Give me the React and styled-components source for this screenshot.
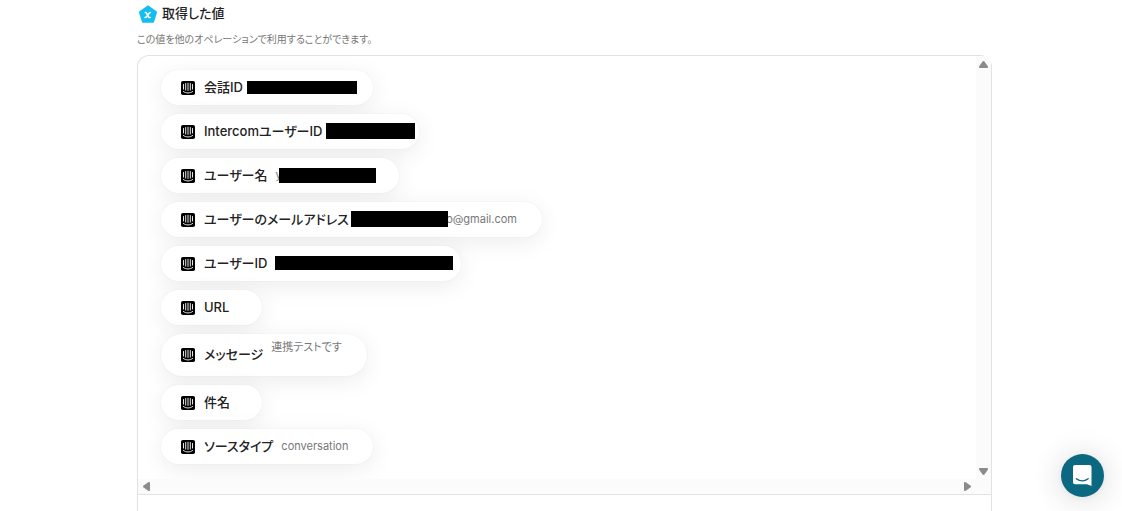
import React from 'react';
import styled, { createGlobalStyle } from 'styled-components';

const values = [
    { label: '会話ID', width: 97, mask: { left: -4, width: 110, height: 13 } },
    { label: 'IntercomユーザーID', width: 64, mask: { left: -4, width: 89, height: 16, up: 2 } },
    { label: 'ユーザー名', text: 'y', width: 98, mask: { left: 3, width: 97, height: 15, up: 1 } },
    { label: 'ユーザーのメールアドレス', text: 'o@gmail.com', width: 160, end: true, mask: { left: -6, width: 97, height: 16, up: 2 } },
    { label: 'ユーザーID', width: 161, mask: { left: 0, width: 178, height: 14, up: 1 } },
    { label: 'URL' },
    { label: 'メッセージ', text: '連携テストです', multiline: true },
    { label: '件名' },
    { label: 'ソースタイプ', text: 'conversation' },
];

const IntercomIcon = () => (
    <svg width="14" height="14" viewBox="0 0 14 14" aria-hidden="true">
        <rect width="14" height="14" rx="1.8" fill="#000" />
        <path
            d="M2.5 3.5v4.6M4.7 2.5v6.6M7 2.2v7.2M9.3 2.5v6.6M11.5 3.5v4.6M2.4 10.5c2.7 2 6.5 2 9.2 0"
            fill="none"
            stroke="#fff"
            strokeWidth="0.9"
            strokeLinecap="round"
        />
    </svg>
);

const VariableIcon = () => (
    <svg width="21" height="19" viewBox="0 0 21 19" aria-hidden="true">
        <path
            d="M11 1.6 18.8 7.3 15.9 16.6H6.1L3.2 7.3Z"
            fill="#15bdf0"
            stroke="#15bdf0"
            strokeWidth="2.4"
            strokeLinejoin="round"
        />
        <path
            d="M8.2 7.6h1l2.8 5h1.2M13.4 7.6c-1.3 0-1.7.9-2.6 2.5s-1.4 2.5-2.8 2.5"
            fill="none"
            stroke="#fff"
            strokeWidth="1.5"
            strokeLinecap="round"
            strokeLinejoin="round"
        />
    </svg>
);

const Arrow = ({ turn = 0 }) => (
    <svg width="11" height="11" viewBox="0 0 11 11" aria-hidden="true">
        <path
            d="M5.5 2 9.5 7.5V8.5H1.5V7.5Z"
            fill="#8b8b8b"
            stroke="#8b8b8b"
            strokeLinejoin="round"
            transform={`rotate(${turn} 5.5 5.5)`}
        />
    </svg>
);

const ValueItem = ({ item }) => (
    <Pill $tall={item.multiline}>
        <IntercomIcon />
        <Label>{item.label}</Label>
        {(item.text || item.mask) && (
            <Value $width={item.width} $end={item.end} $top={item.multiline}>
                {item.text}
                {item.mask && (
                    <Mask
                        $left={item.mask.left}
                        $width={item.mask.width}
                        $height={item.mask.height}
                        $up={item.mask.up}
                    />
                )}
            </Value>
        )}
    </Pill>
);

const App = () => (
    <>
        <GlobalStyle />
        <Page>
            <Header>
                <VariableIcon />
                <Title>取得した値</Title>
            </Header>
            <Description>この値を他のオペレーションで利用することができます。</Description>
            <Card>
                <ScrollArea>
                    <List>
                        {values.map((item) => (
                            <ValueItem key={item.label} item={item} />
                        ))}
                    </List>
                    <VerticalBar>
                        <ArrowButton type="button" aria-label="上へスクロール"><Arrow /></ArrowButton>
                        <ArrowButton type="button" aria-label="下へスクロール"><Arrow turn={180} /></ArrowButton>
                    </VerticalBar>
                    <HorizontalBar>
                        <ArrowButton type="button" aria-label="左へスクロール"><Arrow turn={270} /></ArrowButton>
                        <ArrowButton type="button" aria-label="右へスクロール"><Arrow turn={90} /></ArrowButton>
                    </HorizontalBar>
                    <Corner />
                </ScrollArea>
            </Card>
        </Page>
        <ChatButton type="button" aria-label="チャットを開く">
            <svg width="21" height="23" viewBox="0 0 21 23" aria-hidden="true">
                <path d="M3 1h14.5a2 2 0 0 1 2 2V22l-4.500-1.700H3A2 2 0 0 1 1 18.300V3A2 2 0 0 1 3 1Z" fill="#fff" />
                <path d="M4.4 14.700c3.500 2.700 8.200 2.700 11.700 0" fill="none" stroke="#0a6880" strokeWidth="1.4" strokeLinecap="round" />
            </svg>
        </ChatButton>
    </>
);

export default App;

const GlobalStyle = createGlobalStyle`
    * {
        box-sizing: border-box;
    }
    body {
        margin: 0;
        background: #fff;
        color: #222;
        font-family: Inter, "Noto Sans CJK JP", sans-serif;
        font-feature-settings: "palt";
    }
    #root {
        height: 100vh;
        overflow: hidden;
    }
`;

const Page = styled.main`
    min-height: 100vh;
    padding: 4px 130px 0 137px;
    display: flex;
    flex-direction: column;
`;

const Header = styled.header`
    display: flex;
    align-items: center;
    gap: 4px;
    height: 20px;
`;

const Title = styled.h2`
    margin: 0;
    padding-bottom: 2px;
    font-size: 13px;
    line-height: 20px;
    font-weight: 500;
`;

const Description = styled.p`
    margin: 8px 0;
    font-size: 10px;
    line-height: 15px;
    color: #777;
`;

const Card = styled.section`
    flex: 1;
    border: 1px solid #e2e2e2;
    border-bottom: none;
    border-radius: 12px 12px 0 0;
`;

const ScrollArea = styled.div`
    display: grid;
    grid-template-columns: 1fr 15px;
    grid-template-rows: auto 15px;
    border-bottom: 1px solid #e2e2e2;
`;

const List = styled.ul`
    margin: 0;
    padding: 14px 23px 15px;
    list-style: none;
    display: flex;
    flex-direction: column;
    align-items: flex-start;
    gap: 9px;
    overflow: hidden;
`;

const Pill = styled.li`
    display: flex;
    align-items: center;
    height: ${(props) => (props.$tall ? 42 : 35)}px;
    padding: 0 25px 0 20px;
    border-radius: 21px;
    background: #fff;
    box-shadow: 0 0 2px rgba(0, 0, 0, 0.06), 0 5px 24px rgba(0, 0, 0, 0.08);
    min-width: 101px;
`;

const Label = styled.span`
    margin-left: 9px;
    padding-bottom: 2px;
    font-size: 13px;
    line-height: 20px;
    font-weight: 500;
    white-space: nowrap;
`;

const Value = styled.span`
    position: relative;
    align-self: ${(props) => (props.$top ? 'flex-start' : 'center')};
    width: ${(props) => (props.$width ? `${props.$width}px` : 'auto')};
    height: 20px;
    margin-top: ${(props) => (props.$top ? 4 : 0)}px;
    margin-left: 8px;
    font-size: 11px;
    line-height: 18px;
    text-align: ${(props) => (props.$end ? 'right' : 'left')};
    color: #777;
    white-space: nowrap;
`;

const Mask = styled.span`
    position: absolute;
    top: ${(props) => 3 - (props.$up || 0)}px;
    left: ${(props) => props.$left}px;
    width: ${(props) => props.$width}px;
    height: ${(props) => props.$height}px;
    background: #000;
`;

const VerticalBar = styled.div`
    display: flex;
    flex-direction: column;
    justify-content: space-between;
    padding: 1px 0 0;
    background: #fbfbfb;
`;

const HorizontalBar = styled.div`
    display: flex;
    justify-content: space-between;
    padding: 0 1px;
    background: #fbfbfb;
`;

const Corner = styled.div`
    background: #fbfbfb;
`;

const ArrowButton = styled.button`
    display: flex;
    align-items: center;
    justify-content: center;
    width: 15px;
    height: 15px;
    padding: 0;
    border: none;
    background: none;
`;

const ChatButton = styled.button`
    position: fixed;
    right: 18px;
    bottom: 14px;
    display: flex;
    align-items: center;
    justify-content: center;
    width: 43px;
    height: 43px;
    padding: 0;
    border: none;
    border-radius: 50%;
    background: #0a6880;
    box-shadow: 0 1px 6px rgba(0, 0, 0, 0.06), 0 2px 32px rgba(0, 0, 0, 0.16);
`;
